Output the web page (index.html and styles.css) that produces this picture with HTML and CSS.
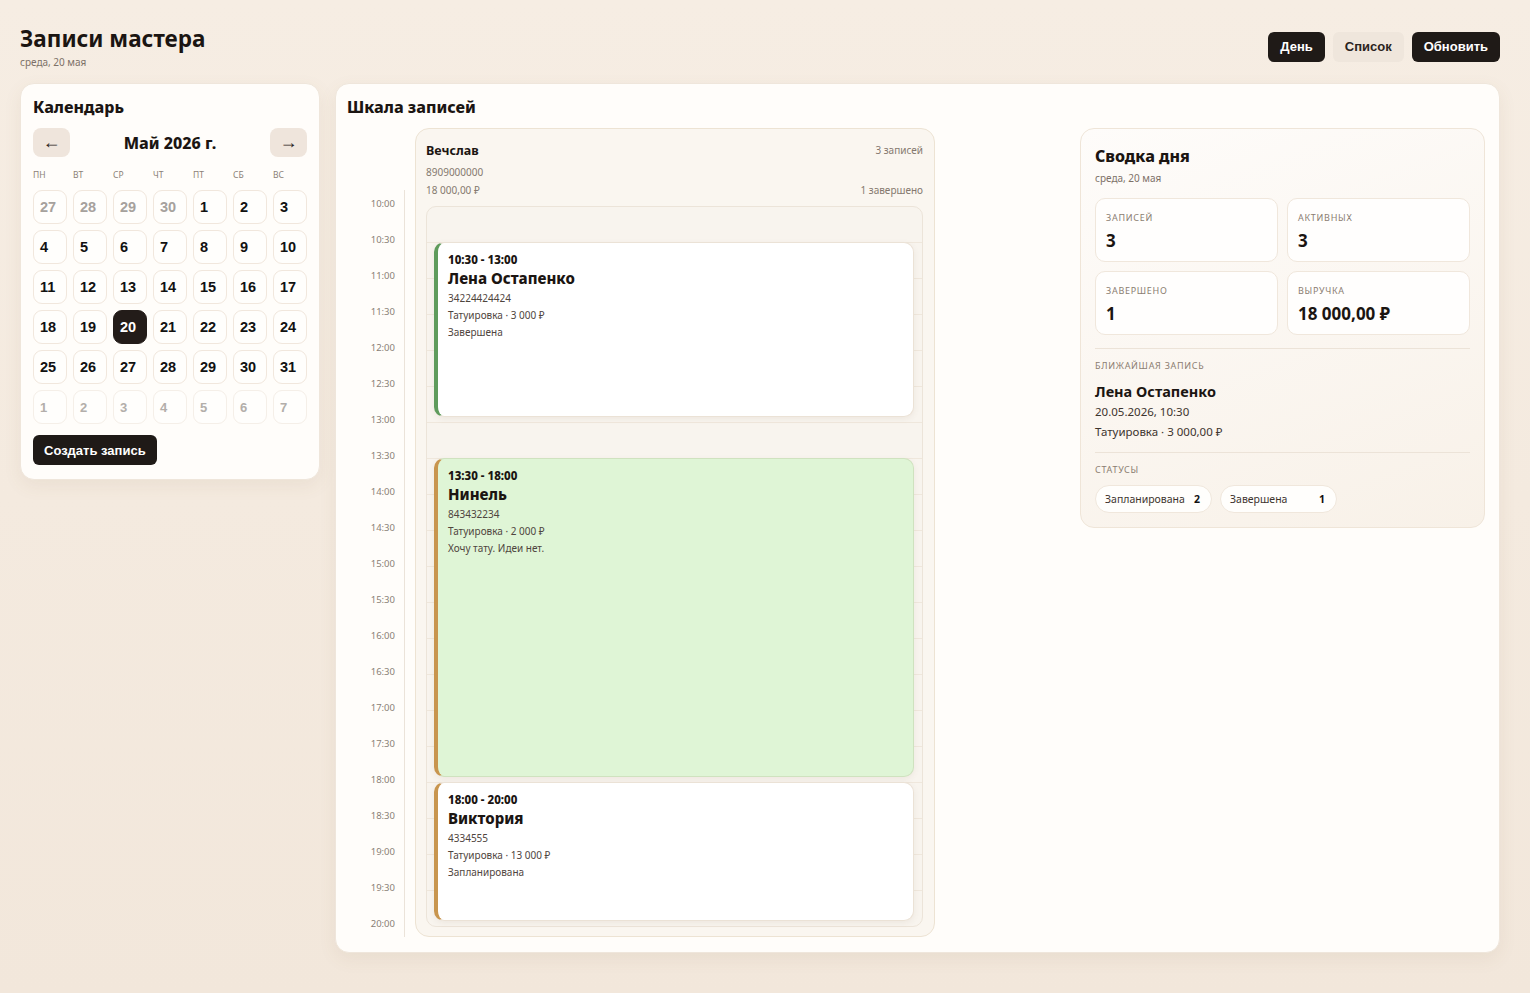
FILE: index.html
```html
<!DOCTYPE html>
<html lang="ru">
<head>
    <meta charset="UTF-8">
    <meta name="viewport" content="width=device-width, initial-scale=1.0">
    <title>Записи мастера</title>
    <link rel="stylesheet" href="styles.css">
</head>
<body>
    <header class="top">
        <div class="top_title">
            <h1>Записи мастера</h1>
            <p class="muted">среда, 20 мая</p>
        </div>
        <nav class="top_actions">
            <button class="btn btn_dark">День</button>
            <button class="btn btn_light">Список</button>
            <button class="btn btn_dark">Обновить</button>
        </nav>
    </header>

    <main class="layout">
        <section class="card calendar">
            <h2>Календарь</h2>
            <div class="cal_nav">
                <button class="cal_arrow">←</button>
                <span class="cal_month">Май 2026 г.</span>
                <button class="cal_arrow">→</button>
            </div>
            <div class="cal_week">
                <span>пн</span><span>вт</span><span>ср</span><span>чт</span><span>пт</span><span>сб</span><span>вс</span>
            </div>
            <div class="cal_grid">
                <button class="day day_out">27</button>
                <button class="day day_out">28</button>
                <button class="day day_out">29</button>
                <button class="day day_out">30</button>
                <button class="day">1</button>
                <button class="day">2</button>
                <button class="day">3</button>
                <button class="day">4</button>
                <button class="day">5</button>
                <button class="day">6</button>
                <button class="day">7</button>
                <button class="day">8</button>
                <button class="day">9</button>
                <button class="day">10</button>
                <button class="day">11</button>
                <button class="day">12</button>
                <button class="day">13</button>
                <button class="day">14</button>
                <button class="day">15</button>
                <button class="day">16</button>
                <button class="day">17</button>
                <button class="day">18</button>
                <button class="day">19</button>
                <button class="day day_active">20</button>
                <button class="day">21</button>
                <button class="day">22</button>
                <button class="day">23</button>
                <button class="day">24</button>
                <button class="day">25</button>
                <button class="day">26</button>
                <button class="day">27</button>
                <button class="day">28</button>
                <button class="day">29</button>
                <button class="day">30</button>
                <button class="day">31</button>
                <button class="day day_next">1</button>
                <button class="day day_next">2</button>
                <button class="day day_next">3</button>
                <button class="day day_next">4</button>
                <button class="day day_next">5</button>
                <button class="day day_next">6</button>
                <button class="day day_next">7</button>
            </div>
            <button class="btn btn_dark btn_create">Создать запись</button>
        </section>

        <section class="card board">
            <h2>Шкала записей</h2>
            <div class="board_body">
                <div class="timeline">
                    <div class="time_axis">
                        <span>10:00</span><span>10:30</span><span>11:00</span><span>11:30</span>
                        <span>12:00</span><span>12:30</span><span>13:00</span><span>13:30</span>
                        <span>14:00</span><span>14:30</span><span>15:00</span><span>15:30</span>
                        <span>16:00</span><span>16:30</span><span>17:00</span><span>17:30</span>
                        <span>18:00</span><span>18:30</span><span>19:00</span><span>19:30</span>
                        <span>20:00</span>
                    </div>
                    <div class="master">
                        <div class="master_head">
                            <div class="row">
                                <strong>Вечслав</strong>
                                <span class="small">3 записей</span>
                            </div>
                            <div class="row small">8909000000</div>
                            <div class="row small">
                                <span>18 000,00 ₽</span>
                                <span>1 завершено</span>
                            </div>
                        </div>
                        <div class="track">
                            <article class="appt appt_done" style="top: 35px; height: 175px;">
                                <b class="appt_time">10:30 - 13:00</b>
                                <h3>Лена Остапенко</h3>
                                <p>34224424424</p>
                                <p>Татуировка · 3 000 ₽</p>
                                <p>Завершена</p>
                            </article>
                            <article class="appt appt_plan appt_green" style="top: 251px; height: 319px;">
                                <b class="appt_time">13:30 - 18:00</b>
                                <h3>Нинель</h3>
                                <p>843432234</p>
                                <p>Татуировка · 2 000 ₽</p>
                                <p>Хочу тату. Идеи нет.</p>
                            </article>
                            <article class="appt appt_plan" style="top: 575px; height: 139px;">
                                <b class="appt_time">18:00 - 20:00</b>
                                <h3>Виктория</h3>
                                <p>4334555</p>
                                <p>Татуировка · 13 000 ₽</p>
                                <p>Запланирована</p>
                            </article>
                        </div>
                    </div>
                </div>

                <aside class="summary">
                    <h2>Сводка дня</h2>
                    <p class="summary_date">среда, 20 мая</p>
                    <div class="stats">
                        <div class="stat"><span class="label">Записей</span><b>3</b></div>
                        <div class="stat"><span class="label">Активных</span><b>3</b></div>
                        <div class="stat"><span class="label">Завершено</span><b>1</b></div>
                        <div class="stat"><span class="label">Выручка</span><b>18 000,00 ₽</b></div>
                    </div>
                    <div class="block">
                        <span class="label">Ближайшая запись</span>
                        <h4>Лена Остапенко</h4>
                        <p>20.05.2026, 10:30</p>
                        <p>Татуировка · 3 000,00 ₽</p>
                    </div>
                    <div class="block">
                        <span class="label">Статусы</span>
                        <div class="pills">
                            <span class="pill">Запланирована <b>2</b></span>
                            <span class="pill">Завершена <b>1</b></span>
                        </div>
                    </div>
                </aside>
            </div>
        </section>
    </main>
</body>
</html>
```

FILE: styles.css
```css
@charset "UTF-8";

*, *::before, *::after {
    margin: 0;
    padding: 0;
    box-sizing: border-box;
}

html {
    font-family: "Noto Sans", "Open Sans", sans-serif;
    color: #1b1512;
}

body {
    min-height: 100vh;
    padding: 24px 30px 20px 20px;
    background: linear-gradient(180deg, #f6ede3 0%, #f2e7db 100%);
}

button {
    font-family: "Liberation Sans", Arial, sans-serif;
    border: none;
    cursor: pointer;
}

/* header */
.top {
    display: flex;
    justify-content: space-between;
    align-items: center;
    margin-bottom: 14px;
}
.top h1 {
    font-size: 22.5px;
    line-height: 30px;
    font-weight: 700;
}
.muted {
    font-size: 10px;
    color: #7d7168;
    margin-top: 1px;
}
.top_actions {display: flex; gap: 8px;}

.btn {
    height: 30px;
    padding: 0 12px;
    border-radius: 6px;
    font-size: 13px;
    font-weight: bold;
}
.btn_dark {background-color: #1f1a17; color: #fff;}
.btn_light {background-color: #efe6dc; color: #2a2320;}

/* layout */
.layout {
    display: grid;
    grid-template-columns: 300px 1fr;
    gap: 15px;
    align-items: start;
}

.card {
    background-color: #fffdfa;
    border: 1px solid #efe6db;
    border-radius: 14px;
    box-shadow: 0 6px 18px rgba(130, 100, 70, 0.08);
}
.card h2 {
    font-size: 16px;
    line-height: 22px;
    font-weight: 800;
}

/* calendar */
.calendar {padding: 12px 12px 14px 12px;}

.cal_nav {
    display: flex;
    justify-content: space-between;
    align-items: center;
    margin-top: 10px;
}
.cal_arrow {
    width: 37px;
    height: 29px;
    border-radius: 8px;
    background-color: #efe5dc;
    color: #2a2320;
    font-size: 18px;
}
.cal_month {font-size: 16px; font-weight: 800;}

.cal_week {
    display: grid;
    grid-template-columns: repeat(7, 34px);
    gap: 6px;
    margin-top: 12px;
    font-size: 8.5px;
    text-transform: uppercase;
    color: #8a7f76;
}

.cal_grid {
    display: grid;
    grid-template-columns: repeat(7, 34px);
    grid-auto-rows: 34px;
    gap: 6px;
    margin-top: 10px;
}
.day {
    background-color: #fffefc;
    border: 1px solid #f1e7dd;
    border-radius: 9px;
    text-align: left;
    padding-left: 6px;
    font-size: 14.5px;
    font-weight: bold;
    color: #111;
}
.day_out {color: #a6a19d;}
.day_next {color: #b3aeaa; font-size: 13px; border-color: #f5efe8;}
.day_active {background-color: #231c19; border-color: #231c19; color: #fff;}

.btn_create {margin-top: 11px; padding: 0 11px; font-size: 13px;}

/* board */
.board {padding: 12px 14px 15px 11px;}

.board_body {
    display: flex;
    justify-content: space-between;
    align-items: flex-start;
    margin-top: 10px;
}

.timeline {display: flex;}

.time_axis {
    width: 58px;
    margin-right: 10px;
    margin-top: 62px;
    padding-top: 8px;
    padding-bottom: 4px;
    border-right: 1px solid #ebe3d9;
    display: flex;
    flex-direction: column;
    align-items: flex-end;
    padding-right: 9px;
}
.time_axis span {
    height: 36px;
    font-size: 9.5px;
    line-height: 12px;
    color: #8a7f76;
}
.time_axis span:last-child {height: 12px;}

.master {
    width: 520px;
    padding: 11px 11px 9px 10px;
    background-color: #faf6f0;
    border: 1px solid #ede3d3;
    border-radius: 14px;
}
.master_head .row {
    display: flex;
    justify-content: space-between;
    align-items: center;
    height: 18px;
}
.master_head .row:first-child {height: 20px; margin-bottom: 3px;}
.master_head strong {font-size: 12.5px; font-weight: 700;}
.small {font-size: 10px; color: #85796f;}
.master_head .row:last-child {margin-bottom: 7px;}

.track {
    position: relative;
    height: 721px;
    border: 1px solid #ece4d9;
    border-radius: 10px;
    background-color: #f8f4ee;
    background-image: repeating-linear-gradient(180deg, transparent 0, transparent 35px, #efe7dc 35px, #efe7dc 36px);
}

.appt {
    position: absolute;
    left: 7px;
    right: 8px;
    padding: 10px 12px 10px 10px;
    background-color: #fff;
    border: 1px solid #ebe2d6;
    border-left: 4px solid #c8954e;
    border-radius: 10px;
    box-shadow: 0 2px 6px rgba(120, 90, 60, 0.08);
}
.appt_done {border-left-color: #5f9b5c;}
.appt_green {background-color: #dff5d6; border-color: #cfe2bf; border-left-color: #c8954e;}
.appt_time {display: block; font-size: 11.5px; line-height: 14px; font-weight: 800;}
.appt h3 {font-size: 15px; line-height: 22px; font-weight: 800; margin-bottom: 1px;}
.appt p {font-size: 10px; line-height: 17px; color: #4f453e;}

/* summary */
.summary {
    width: 405px;
    padding: 16px 14px 14px 14px;
    background: linear-gradient(160deg, #fefcfa 0%, #f8f1e8 100%);
    border: 1px solid #efe5d8;
    border-radius: 14px;
}
.summary_date {font-size: 10px; color: #7d7168; margin-top: 4px;}

.stats {
    display: grid;
    grid-template-columns: 1fr 1fr;
    gap: 9px;
    margin-top: 13px;
}
.stat {
    height: 64px;
    padding: 12px 10px;
    background-color: #fffefd;
    border: 1px solid #f0e7dc;
    border-radius: 10px;
}
.stat b {display: block; font-size: 17px; line-height: 24px; margin-top: 4px; font-weight: 700;}

.label {
    display: block;
    font-size: 9px;
    line-height: 14px;
    text-transform: uppercase;
    letter-spacing: 0.08em;
    color: #8b7d71;
}

.block {
    margin-top: 13px;
    padding-top: 10px;
    border-top: 1px solid #ece3d8;
}
.block h4 {font-size: 14.5px; line-height: 22px; font-weight: 700; margin-top: 7px;}
.block p {font-size: 11.5px; line-height: 20px; color: #3d342e;}
.block:last-child {margin-top: 10px;}

.pills {display: flex; gap: 8px; margin-top: 8px;}
.pill {
    display: flex;
    justify-content: space-between;
    align-items: center;
    min-width: 117px;
    height: 28px;
    padding: 0 11px 0 9px;
    background-color: #fffefc;
    border: 1px solid #f0e7dc;
    border-radius: 14px;
    font-size: 10.5px;
    color: #3d342e;
}
.pill b {color: #111; font-size: 10.5px;}
```
